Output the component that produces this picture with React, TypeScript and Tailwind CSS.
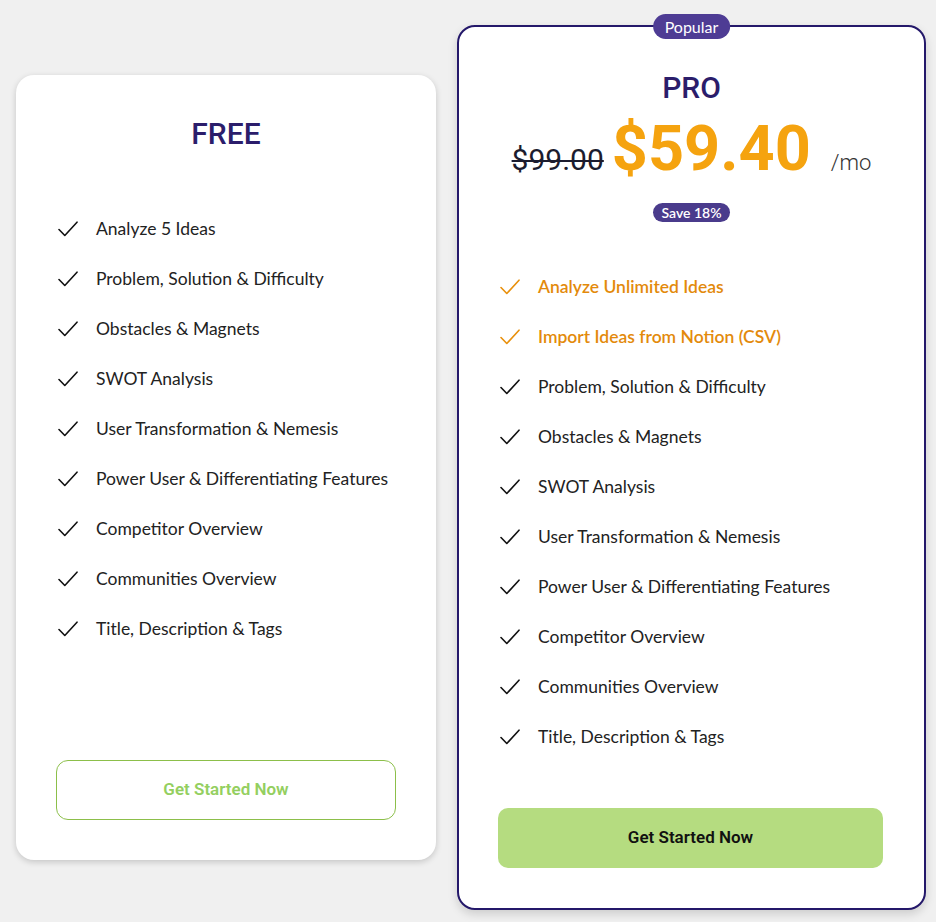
import React from 'react';

interface IFeature {
  label: string;
  highlight?: boolean;
}

const freeFeatures: IFeature[] = [
  { label: 'Analyze 5 Ideas' },
  { label: 'Problem, Solution & Difficulty' },
  { label: 'Obstacles & Magnets' },
  { label: 'SWOT Analysis' },
  { label: 'User Transformation & Nemesis' },
  { label: 'Power User & Differentiating Features' },
  { label: 'Competitor Overview' },
  { label: 'Communities Overview' },
  { label: 'Title, Description & Tags' },
];

const proFeatures: IFeature[] = [
  { label: 'Analyze Unlimited Ideas', highlight: true },
  { label: 'Import Ideas from Notion (CSV)', highlight: true },
  ...freeFeatures.slice(1),
];

const Check = ({ className }: { className: string }) => (
  <svg viewBox="0 0 20 16" className={`w-[20px] h-[16px] shrink-0 ${className}`} fill="none">
    <path d="M1 8.5 L6.8 14.5 L19 1.2" stroke="currentColor" strokeWidth="1.6" strokeLinecap="round" strokeLinejoin="round" />
  </svg>
);

const FeatureList = ({ items }: { items: IFeature[] }) => (
  <ul className="flex flex-col">
    {items.map(f => (
      <li key={f.label} className="h-[50px] flex items-center gap-[18px]">
        <Check className={f.highlight ? 'text-[#e8900c]' : 'text-[#111]'} />
        <span className={`text-[17.5px] ${f.highlight ? 'text-[#e38a0b] font-semibold' : 'text-[#222] font-normal'}`}>{f.label}</span>
      </li>
    ))}
  </ul>
);

export default function App() {
  return (
    <div className="min-h-[922px] bg-[#f0f0f0] flex items-center gap-[21px] pl-[16px] pt-[25px] pb-[12px] font-['Segoe_UI',Lato,sans-serif]">
      <div className="w-[420px] h-[785px] bg-white rounded-[18px] shadow-[0_2px_6px_rgba(0,0,0,0.18)] flex flex-col px-[42px] pt-[44px] pb-[40px]">
        <h2 className="text-center text-[30px] leading-[30px] font-medium text-[#2b1d6b] font-['Roboto',sans-serif]">FREE</h2>
        <div className="mt-[55px]">
          <FeatureList items={freeFeatures} />
        </div>
        <button className="mt-auto -mx-[2px] h-[60px] rounded-[12px] border border-[#8cbf4a] text-[#94cf60] text-[17px] font-semibold font-['Roboto',sans-serif]">
          Get Started Now
        </button>
      </div>

      <div className="relative w-[469px] h-[885px] bg-white rounded-[18px] border-2 border-[#24186a] shadow-[0_4px_10px_rgba(0,0,0,0.15)] flex flex-col px-[41px] pt-[46px] pb-[40px]">
        <span className="absolute left-1/2 -translate-x-1/2 -top-[13px] h-[25px] px-[12px] rounded-full bg-[#4e3c94] text-white text-[16px] leading-[25px]">
          Popular
        </span>
        <h2 className="text-center text-[30px] leading-[30px] font-medium text-[#2b1d6b] font-['Roboto',sans-serif]">PRO</h2>
        <div className="flex items-baseline justify-center mt-[6px] font-['Roboto',sans-serif]">
          <span className="text-[30px] text-[#1c1c2e] line-through decoration-[2px]">$99.00</span>
          <span className="ml-[8px] text-[63px] leading-[80px] font-bold text-[#f5a30f]">$59.40</span>
          <span className="ml-[20px] text-[22px] text-[#333] font-light">/mo</span>
        </div>
        <div className="flex justify-center mt-[14px]">
          <span className="h-[19px] px-[8px] rounded-full bg-[#4a3b8c] text-white text-[14px] leading-[19px] font-semibold">Save 18%</span>
        </div>
        <div className="mt-[40px]">
          <FeatureList items={proFeatures} />
        </div>
        <button className="mt-auto -ml-[2px] h-[60px] rounded-[10px] bg-[#b5dc80] text-[#111] text-[17px] font-semibold font-['Roboto',sans-serif]">
          Get Started Now
        </button>
      </div>
    </div>
  );
}
